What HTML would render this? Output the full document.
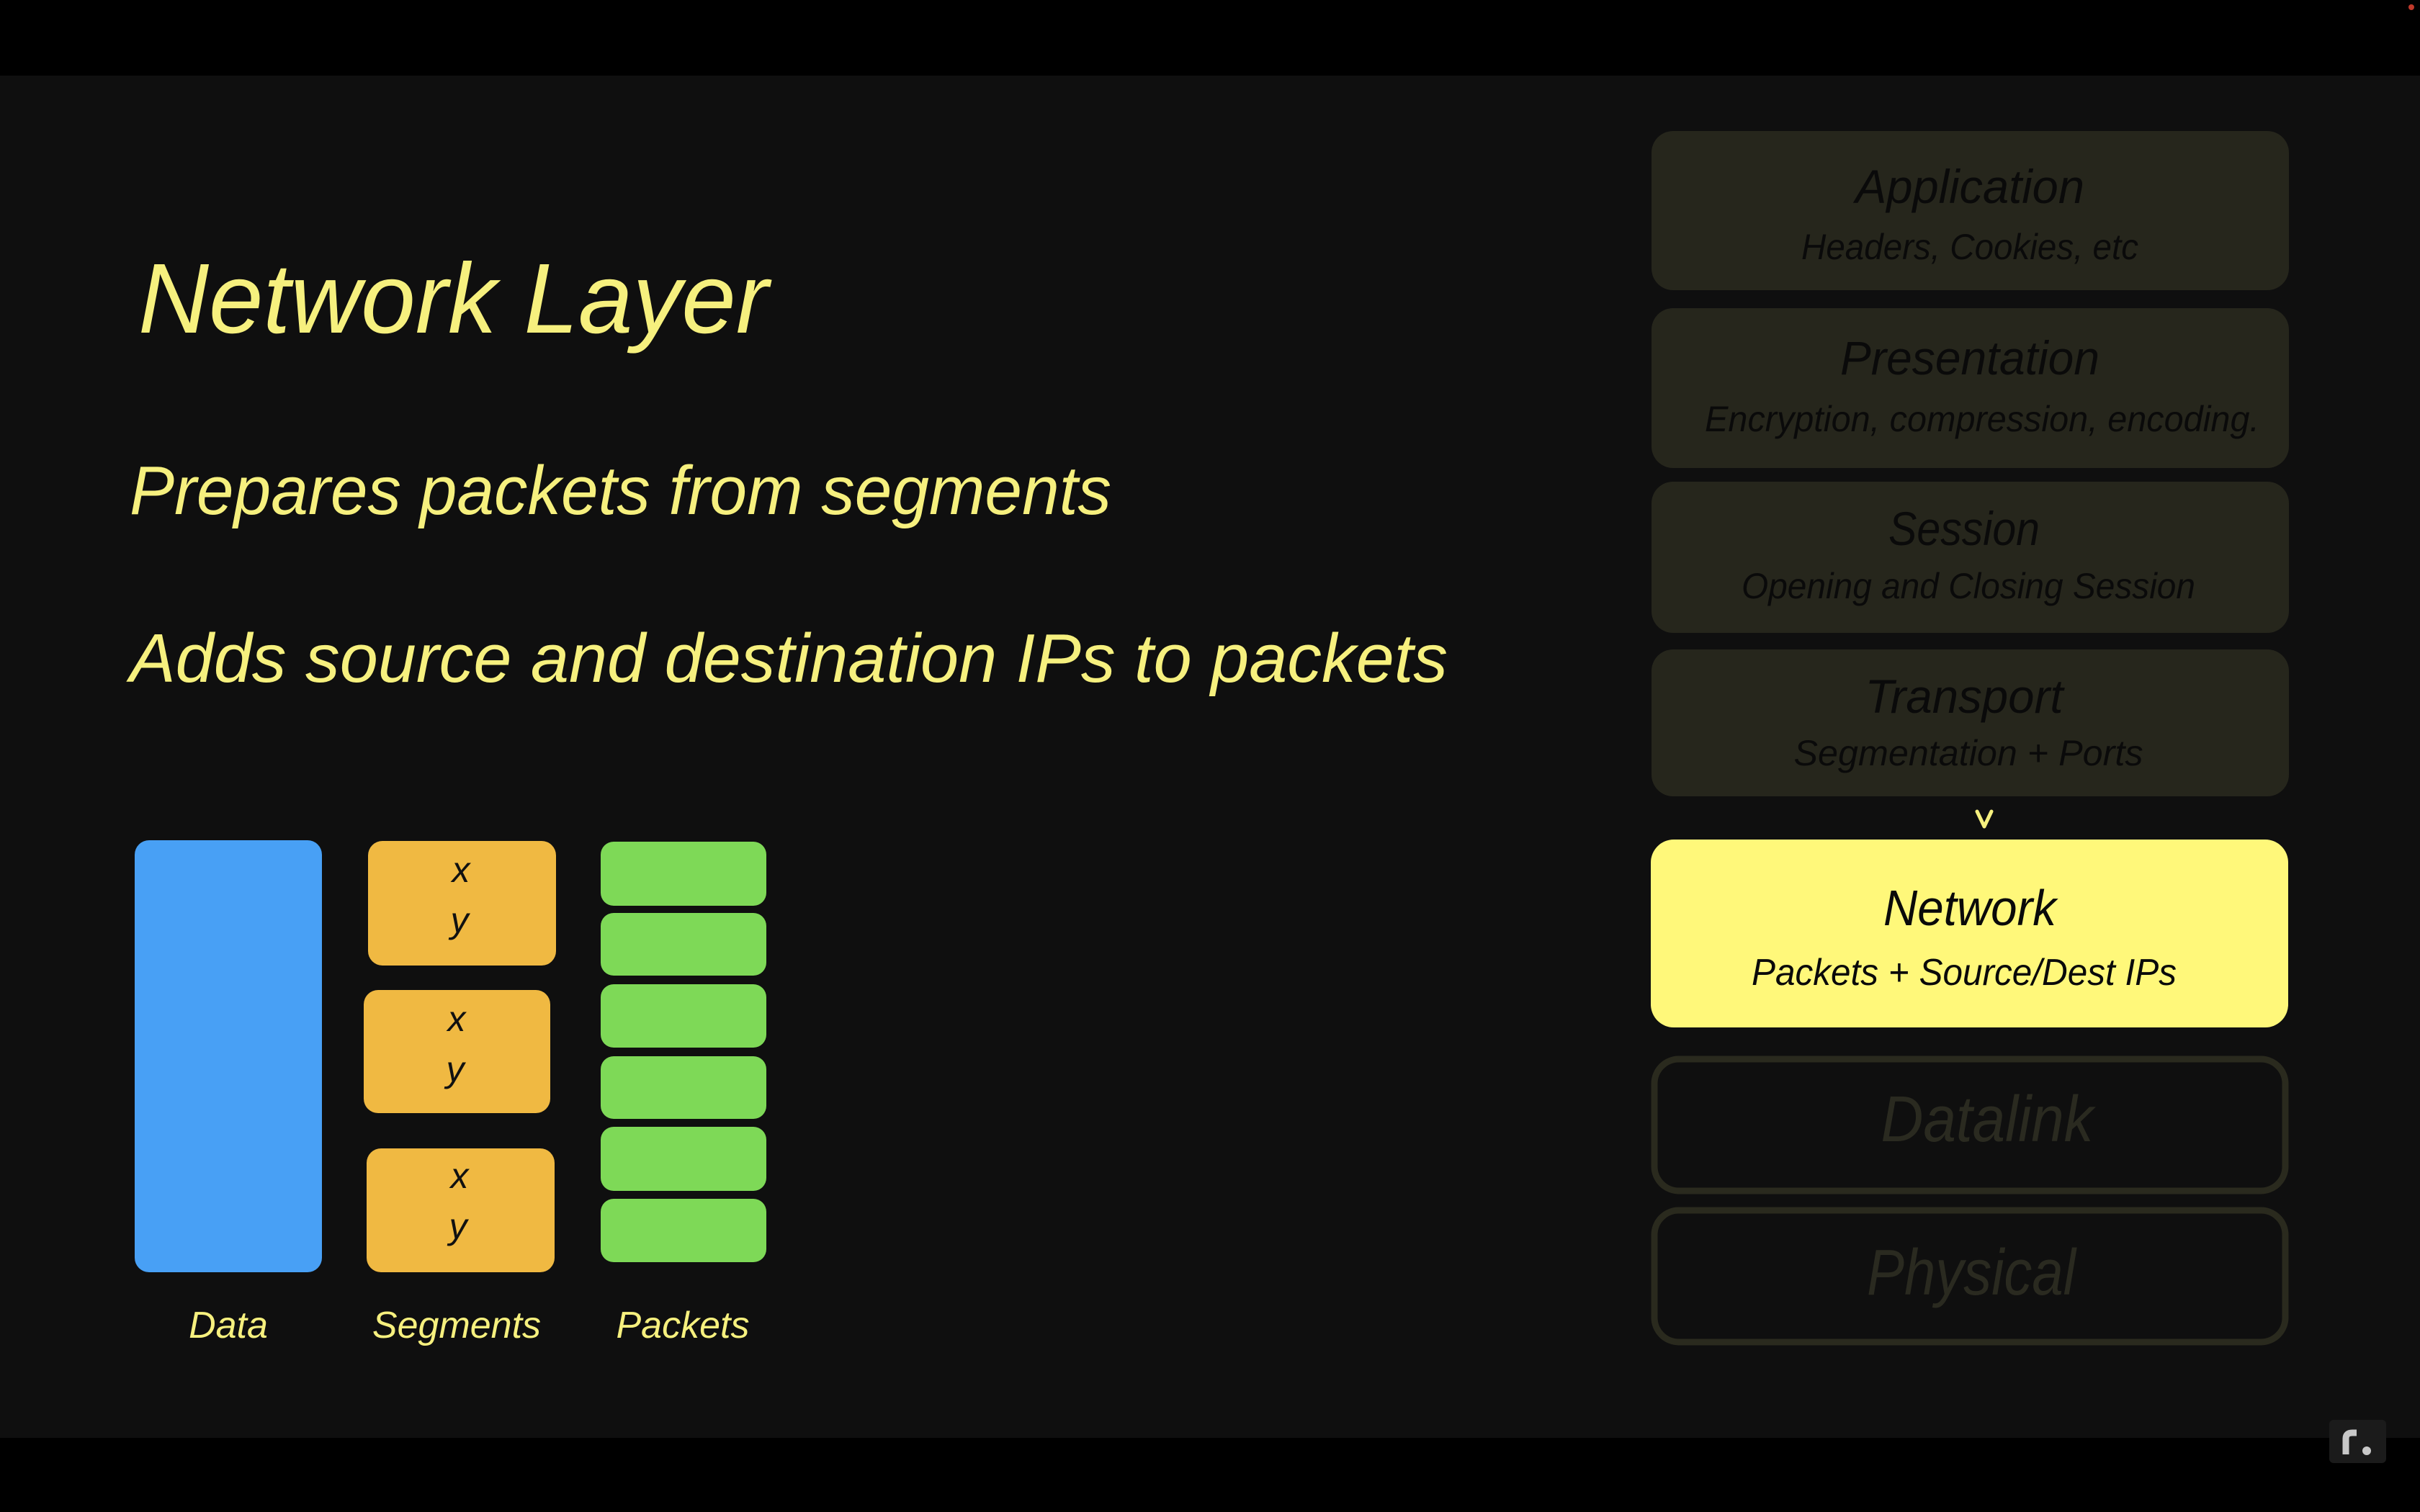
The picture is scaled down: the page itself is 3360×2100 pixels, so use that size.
<!DOCTYPE html>
<html><head><meta charset="utf-8"><style>
html,body{margin:0;padding:0;background:#0f0f0f;}
svg{display:block;}
text{font-family:"Liberation Sans",sans-serif;font-style:italic;}
</style></head><body>
<svg width="3360" height="2100" viewBox="0 0 3360 2100" xmlns="http://www.w3.org/2000/svg">
<rect x="0" y="0" width="3360" height="2100" fill="#0f0f0f"/>
<rect x="0" y="0" width="3360" height="105" fill="#000"/>
<rect x="0" y="1997" width="3360" height="103" fill="#000"/>
<circle cx="3348" cy="10" r="4" fill="#c0392b"/>

<g fill="#f6f07e">
<text x="192" y="462" font-size="138" textLength="875" lengthAdjust="spacingAndGlyphs">Network Layer</text>
<text x="180" y="714" font-size="96" textLength="1363" lengthAdjust="spacingAndGlyphs">Prepares packets from segments</text>
<text x="180" y="947" font-size="96" textLength="1830" lengthAdjust="spacingAndGlyphs">Adds source and destination IPs to packets</text>
</g>

<rect x="187" y="1167" width="260" height="600" rx="20" fill="#48a0f5"/>
<g fill="#f0b942">
<rect x="511" y="1168" width="261" height="173" rx="20"/>
<rect x="505" y="1375" width="259" height="171" rx="20"/>
<rect x="509" y="1595" width="261" height="172" rx="20"/>
</g>
<g fill="#111" font-size="50" text-anchor="middle">
<text x="640" y="1225">x</text><text x="638" y="1295">y</text>
<text x="634" y="1432">x</text><text x="632" y="1502">y</text>
<text x="638" y="1650">x</text><text x="636" y="1720">y</text>
</g>
<g fill="#7ed957">
<rect x="834" y="1169" width="230" height="89" rx="18"/>
<rect x="834" y="1268" width="230" height="87" rx="18"/>
<rect x="834" y="1367" width="230" height="88" rx="18"/>
<rect x="834" y="1467" width="230" height="87" rx="18"/>
<rect x="834" y="1565" width="230" height="89" rx="18"/>
<rect x="834" y="1665" width="230" height="88" rx="18"/>
</g>
<g fill="#f6f07e" font-size="52" text-anchor="middle">
<text x="317" y="1858">Data</text>
<text x="634" y="1858">Segments</text>
<text x="948" y="1858">Packets</text>
</g>

<g fill="#26261c">
<rect x="2293" y="182" width="885" height="221" rx="30"/>
<rect x="2293" y="428" width="885" height="222" rx="30"/>
<rect x="2293" y="669" width="885" height="210" rx="30"/>
<rect x="2293" y="902" width="885" height="204" rx="30"/>
</g>
<g fill="#0a0a0a" text-anchor="middle">
<text x="2735" y="282" font-size="66" textLength="318" lengthAdjust="spacingAndGlyphs">Application</text>
<text x="2735" y="360" font-size="50" textLength="468" lengthAdjust="spacingAndGlyphs">Headers, Cookies, etc</text>
<text x="2735" y="520" font-size="66" textLength="360" lengthAdjust="spacingAndGlyphs">Presentation</text>
<text x="2752" y="599" font-size="50" textLength="770" lengthAdjust="spacingAndGlyphs">Encryption, compression, encoding.</text>
<text x="2727" y="757" font-size="66" textLength="210" lengthAdjust="spacingAndGlyphs">Session</text>
<text x="2733" y="831" font-size="50" textLength="630" lengthAdjust="spacingAndGlyphs">Opening and Closing Session</text>
<text x="2727" y="990" font-size="66" textLength="275" lengthAdjust="spacingAndGlyphs">Transport</text>
<text x="2733" y="1063" font-size="50" textLength="485" lengthAdjust="spacingAndGlyphs">Segmentation + Ports</text>
</g>

<path d="M2745 1127 L2755 1148 L2765 1127" stroke="#f6f07e" stroke-width="5" fill="none" stroke-linecap="round" stroke-linejoin="round"/>

<rect x="2292" y="1166" width="885" height="261" rx="32" fill="#fff87a"/>
<g fill="#0a0a0a" text-anchor="middle">
<text x="2735" y="1285" font-size="70" textLength="240" lengthAdjust="spacingAndGlyphs">Network</text>
<text x="2727" y="1368" font-size="52" textLength="590" lengthAdjust="spacingAndGlyphs">Packets + Source/Dest IPs</text>
</g>

<g fill="none" stroke="#2a2a1e" stroke-width="9">
<rect x="2297" y="1471" width="876" height="183" rx="34"/>
<rect x="2297" y="1681" width="876" height="183" rx="34"/>
</g>
<g fill="#2a2a20" text-anchor="middle">
<text x="2759" y="1585" font-size="90" textLength="295" lengthAdjust="spacingAndGlyphs">Datalink</text>
<text x="2737" y="1798" font-size="90" textLength="290" lengthAdjust="spacingAndGlyphs">Physical</text>
</g>

<rect x="3234" y="1972" width="79" height="60" rx="6" fill="#1b1b1b"/>
<path d="M3257 2020 V1998 Q3257 1990 3266 1990 H3272" stroke="#c8c8c8" stroke-width="9" fill="none"/>
<circle cx="3286" cy="2015" r="6" fill="#c8c8c8"/>
</svg>
</body></html>
